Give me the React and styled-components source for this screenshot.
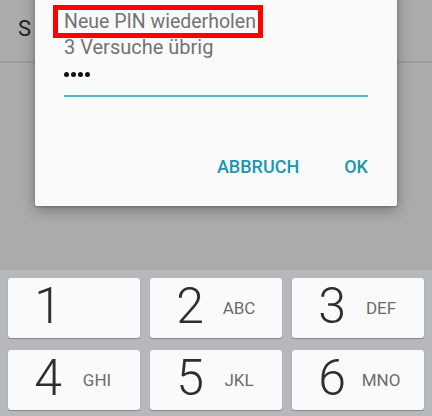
import React from "react";
import styled, { createGlobalStyle } from "styled-components";

const Global = createGlobalStyle`
  html, body { margin: 0; padding: 0; }
  body { font-family: Roboto, "Noto Sans", sans-serif; background: #ababab; }
  * { box-sizing: border-box; }
`;

const Screen = styled.div`
  position: relative;
  width: 432px;
  height: 416px;
  overflow: hidden;
  display: flex;
  flex-direction: column;
`;

const Backdrop = styled.div`
  flex: 0 0 270px;
  background: #ababab;
`;

const ListRow = styled.div`
  height: 63px;
  border-bottom: 2px solid #9d9d9d;
  padding-left: 18px;
  display: flex;
  align-items: center;
  font-size: 22px;
  color: #1e1e1e;
  padding-bottom: 4px;
`;

const Keyboard = styled.div`
  flex: 1 0 auto;
  background: #b7b8bc;
  padding: 8px;
  display: grid;
  grid-template-columns: repeat(3, 1fr);
  grid-auto-rows: 60px;
  align-content: start;
  column-gap: 10px;
  row-gap: 12px;
`;

const Key = styled.div`
  background: #fafafa;
  border-radius: 3px;
  box-shadow: 0 1px 1px rgba(0, 0, 0, 0.28);
  display: flex;
  align-items: center;
  padding-left: 20px;
`;

const Digit = styled.span`
  width: 40px;
  text-align: center;
  font-size: 50px;
  line-height: 50px;
  font-weight: 300;
  color: #2e2e2e;
  margin-bottom: 4px;
`;

const Letters = styled.span`
  width: 46px;
  margin-left: 6px;
  text-align: center;
  font-size: 17px;
  line-height: 17px;
  color: #6c6c6c;
`;

const Dialog = styled.div`
  position: absolute;
  top: -24px;
  left: 35px;
  right: 35px;
  background: #fafafa;
  border-radius: 2px;
  box-shadow: 0 4px 14px rgba(0, 0, 0, 0.3), 0 1px 3px rgba(0, 0, 0, 0.2);
  padding: 29px;
  display: flex;
  flex-direction: column;
`;

const Title = styled.div`
  align-self: flex-start;
  margin-left: -11px;
  border: 5px solid #ff0000;
  padding: 0 2px 0 6px;
  font-size: 19.5px;
  line-height: 23px;
  color: #737373;
`;

const Subtitle = styled.div`
  margin-top: -1px;
  font-size: 20px;
  line-height: 20px;
  color: #737373;
`;

const Field = styled.div`
  padding: 15px 0 18px;
  border-bottom: 2px solid #4fb8d0;
  display: flex;
  gap: 2px;
`;

const Dot = styled.span`
  width: 5px;
  height: 5px;
  border-radius: 50%;
  background: #111;
`;

const Actions = styled.div`
  margin-top: 60px;
  display: flex;
  justify-content: flex-end;
  gap: 45px;
`;

const ActionButton = styled.span`
  font-size: 18px;
  line-height: 20px;
  font-weight: 500;
  color: #1a97b1;
`;

const keys = [
  ["1", ""],
  ["2", "ABC"],
  ["3", "DEF"],
  ["4", "GHI"],
  ["5", "JKL"],
  ["6", "MNO"],
];

export default function App() {
  return (
    <>
      <Global />
      <Screen>
        <Backdrop>
          <ListRow>S</ListRow>
        </Backdrop>
        <Keyboard>
          {keys.map(([d, l]) => (
            <Key key={d}>
              <Digit>{d}</Digit>
              {l && <Letters>{l}</Letters>}
            </Key>
          ))}
        </Keyboard>
        <Dialog>
          <Title>Neue PIN wiederholen</Title>
          <Subtitle>3 Versuche übrig</Subtitle>
          <Field>
            <Dot />
            <Dot />
            <Dot />
            <Dot />
          </Field>
          <Actions>
            <ActionButton>ABBRUCH</ActionButton>
            <ActionButton>OK</ActionButton>
          </Actions>
        </Dialog>
      </Screen>
    </>
  );
}
